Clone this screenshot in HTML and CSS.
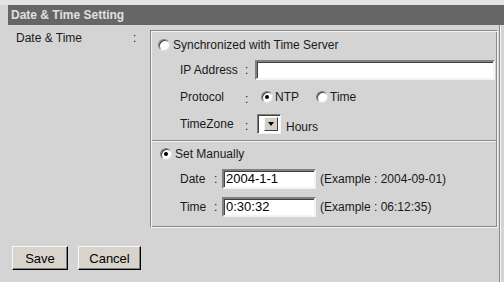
FILE: index.html
```html
<!DOCTYPE html>
<html lang="en">
<head>
  <meta charset="UTF-8">
  <title>Date &amp; Time Setting</title>
  <link rel="stylesheet" href="styles.css">
</head>
<body>
  <div class="topline"></div>
  <div class="header">Date &amp; Time Setting</div>
  <div class="content">
    <div class="row">
      <div class="row-label">Date &amp; Time</div>
      <div class="row-colon">:</div>
      <div class="box">
        <div class="section sync">
          <div class="line line-radio">
            <span class="radio"></span><span>Synchronized with Time Server</span>
          </div>
          <div class="line line-ip sub">
            <span class="lbl lbl-wide">IP Address</span><span class="colon">:</span>
            <span class="field field-ip"></span>
          </div>
          <div class="line line-proto sub">
            <span class="lbl lbl-wide">Protocol</span><span class="colon">:</span>
            <span class="radio checked"></span><span class="opt">NTP</span>
            <span class="radio"></span><span>Time</span>
          </div>
          <div class="line line-tz sub">
            <span class="lbl lbl-wide">TimeZone</span><span class="colon">:</span>
            <span class="select"><span class="select-btn"></span></span>
            <span class="hours">Hours</span>
          </div>
        </div>
        <div class="section manual">
          <div class="line line-manual">
            <span class="radio checked"></span><span>Set Manually</span>
          </div>
          <div class="line line-date sub">
            <span class="lbl lbl-narrow">Date</span><span class="colon colon-narrow">:</span>
            <span class="field field-short">2004-1-1</span>
            <span class="example">(Example : 2004-09-01)</span>
          </div>
          <div class="line line-time sub">
            <span class="lbl lbl-narrow">Time</span><span class="colon colon-narrow">:</span>
            <span class="field field-short">0:30:32</span>
            <span class="example">(Example : 06:12:35)</span>
          </div>
        </div>
      </div>
    </div>
    <div class="actions">
      <button class="btn btn-save">Save</button>
      <button class="btn btn-cancel">Cancel</button>
    </div>
  </div>
</body>
</html>
```

FILE: styles.css
```css
body { margin: 0; background: #d4d4d4; font-family: "Liberation Sans", Arial, sans-serif; font-size: 12px; color: #1a1a1a; }
.topline { height: 5px; background: #e4e4e4; }
.header { margin-left: 8px; height: 20px; line-height: 20px; padding-left: 3px; background: #666666; color: #e0e0e0; font-weight: bold; }
.content { width: 499px; height: 257px; border-right: 1px solid #8a8a8a; box-shadow: 1px 0 0 #f4f4f4; }
.row { display: flex; padding: 5px 0 0 16px; }
.row-label { width: 117px; padding-top: 1px; line-height: 14px; }
.row-colon { width: 17px; padding-top: 1px; line-height: 14px; }
.box { width: 344px; border: 1px solid; border-color: #8a8a8a #f4f4f4 #f4f4f4 #8a8a8a; box-shadow: inset 1px 1px 0 #f4f4f4, inset -1px -1px 0 #8a8a8a; padding: 1px; }
.section { padding-left: 6px; }
.sync { height: 108px; }
.manual { height: 84px; border-top: 1px solid #8a8a8a; box-shadow: inset 0 1px 0 #f4f4f4; padding-top: 1px; }
.line { display: flex; align-items: center; }
.sub { padding-left: 22px; }
.line-radio { height: 25px; }
.line-ip { height: 25px; }
.line-proto { height: 30px; }
.line-tz { height: 24px; }
.line-manual { height: 24px; }
.line-manual .radio { margin-left: 2px; }
.line-date { height: 25px; }
.line-time { height: 24px; margin-top: 4px; }
.radio { width: 12px; height: 12px; box-sizing: border-box; border-radius: 50%; background: #fff; border: 1px solid; border-color: #808080 #e0e0e0 #e0e0e0 #808080; box-shadow: inset 1px 1px 0 #404040; margin-right: 3px; position: relative; flex: none; }
.radio.checked::after { content: ""; position: absolute; left: 3px; top: 3px; width: 4px; height: 4px; border-radius: 50%; background: #000; }
.lbl-wide { width: 65px; }
.lbl-narrow { width: 34px; }
.colon { width: 10px; }
.colon-narrow { width: 8px; }
.line-proto .colon, .line-tz .colon { width: 12px; padding-top: 4px; }
.line-proto .opt { margin-right: 13px; }
.line-proto .radio { margin-left: 4px; margin-right: 2px; }
.field { height: 20px; box-sizing: border-box; background: #fff; border: 2px solid; border-color: #808080 #f4f4f4 #f4f4f4 #808080; box-shadow: inset 1px 1px 0 #404040; padding-left: 2px; line-height: 16px; font-size: 13px; color: #000; }
.field-ip { width: 240px; }
.field-short { width: 94px; }
.example { margin-left: 4px; }
.select { width: 24px; height: 20px; box-sizing: border-box; background: #fff; border: 1px solid; border-color: #808080 #f4f4f4 #f4f4f4 #808080; box-shadow: inset 1px 1px 0 #404040; display: flex; justify-content: flex-end; padding: 2px 2px 2px 0; }
.select-btn { width: 14px; height: 14px; box-sizing: border-box; background: #d4d0c8; border: 1px solid; border-color: #f4f4f4 #404040 #404040 #f4f4f4; position: relative; }
.select-btn::after { content: ""; position: absolute; left: 2.5px; top: 4px; border-left: 3.5px solid transparent; border-right: 3.5px solid transparent; border-top: 4px solid #000; }
.hours { margin-left: 5px; padding-top: 5px; }
.actions { display: flex; gap: 10px; padding: 18px 0 0 12px; }
.btn { height: 24px; padding: 0; background: #d8d4cc; font-family: "Liberation Sans", Arial, sans-serif; font-size: 13px; color: #000; border: 1px solid; border-color: #f8f8f8 #000 #000 #f8f8f8; box-shadow: inset -1px -1px 0 #808080; }
.btn-save { width: 56px; }
.btn-cancel { width: 63px; }
```
